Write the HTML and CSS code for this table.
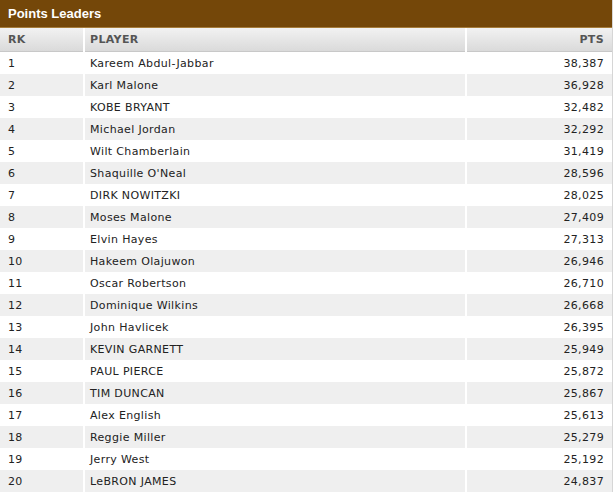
FILE: index.html
```html
<!DOCTYPE html>
<html>
<head>
<meta charset="utf-8">
<link rel="stylesheet" href="styles.css">
</head>
<body>
<div class="card">
  <div class="title">Points Leaders</div>
  <table class="leaders">
    <thead>
      <tr><th class="rk">RK</th><th class="player">PLAYER</th><th class="pts">PTS</th></tr>
    </thead>
    <tbody>
      <tr><td class="rk">1</td><td class="player">Kareem Abdul-Jabbar</td><td class="pts">38,387</td></tr>
      <tr class="alt"><td class="rk">2</td><td class="player">Karl Malone</td><td class="pts">36,928</td></tr>
      <tr><td class="rk">3</td><td class="player">KOBE BRYANT</td><td class="pts">32,482</td></tr>
      <tr class="alt"><td class="rk">4</td><td class="player">Michael Jordan</td><td class="pts">32,292</td></tr>
      <tr><td class="rk">5</td><td class="player">Wilt Chamberlain</td><td class="pts">31,419</td></tr>
      <tr class="alt"><td class="rk">6</td><td class="player">Shaquille O'Neal</td><td class="pts">28,596</td></tr>
      <tr><td class="rk">7</td><td class="player">DIRK NOWITZKI</td><td class="pts">28,025</td></tr>
      <tr class="alt"><td class="rk">8</td><td class="player">Moses Malone</td><td class="pts">27,409</td></tr>
      <tr><td class="rk">9</td><td class="player">Elvin Hayes</td><td class="pts">27,313</td></tr>
      <tr class="alt"><td class="rk">10</td><td class="player">Hakeem Olajuwon</td><td class="pts">26,946</td></tr>
      <tr><td class="rk">11</td><td class="player">Oscar Robertson</td><td class="pts">26,710</td></tr>
      <tr class="alt"><td class="rk">12</td><td class="player">Dominique Wilkins</td><td class="pts">26,668</td></tr>
      <tr><td class="rk">13</td><td class="player">John Havlicek</td><td class="pts">26,395</td></tr>
      <tr class="alt"><td class="rk">14</td><td class="player">KEVIN GARNETT</td><td class="pts">25,949</td></tr>
      <tr><td class="rk">15</td><td class="player">PAUL PIERCE</td><td class="pts">25,872</td></tr>
      <tr class="alt"><td class="rk">16</td><td class="player">TIM DUNCAN</td><td class="pts">25,867</td></tr>
      <tr><td class="rk">17</td><td class="player">Alex English</td><td class="pts">25,613</td></tr>
      <tr class="alt"><td class="rk">18</td><td class="player">Reggie Miller</td><td class="pts">25,279</td></tr>
      <tr><td class="rk">19</td><td class="player">Jerry West</td><td class="pts">25,192</td></tr>
      <tr class="alt"><td class="rk">20</td><td class="player">LeBRON JAMES</td><td class="pts">24,837</td></tr>
    </tbody>
  </table>
</div>
</body>
</html>
```
FILE: styles.css
```css
html, body { margin: 0; padding: 0; background: #fff; }
.card {
  width: 612px;
  border-right: 1px solid #d6d6d6;
}
.title {
  height: 27px;
  line-height: 28px;
  background: #744709;
  border-bottom: 1px solid #a67c3a;
  color: #fff;
  font-family: "Liberation Sans", Arial, sans-serif;
  font-weight: bold;
  font-size: 13px;
  padding-left: 8px;
}
.leaders {
  width: 100%;
  border-collapse: collapse;
  font-family: "DejaVu Sans", Verdana, sans-serif;
  font-size: 11px;
  letter-spacing: 0.35px;
  color: #222;
}
.leaders th {
  height: 23px;
  padding: 0 7px;
  background: linear-gradient(#f2f2f2, #dadada);
  color: #555;
  font-weight: bold;
  text-align: left;
  border-left: 2px solid #fff;
  border-bottom: 1px solid #c8c8c8;
}
.leaders th:first-child, .leaders td:first-child { border-left: none; }
.leaders td {
  height: 22px;
  padding: 0 7px;
  border-left: 2px solid #fff;
}
.leaders tr.alt td { background: #efefef; }
.leaders .rk { width: 68px; padding-left: 8px; }
.leaders th.player, .leaders td.player { padding-left: 5px; }
.leaders .pts { width: 130px; text-align: right; padding-right: 8px; }
```
